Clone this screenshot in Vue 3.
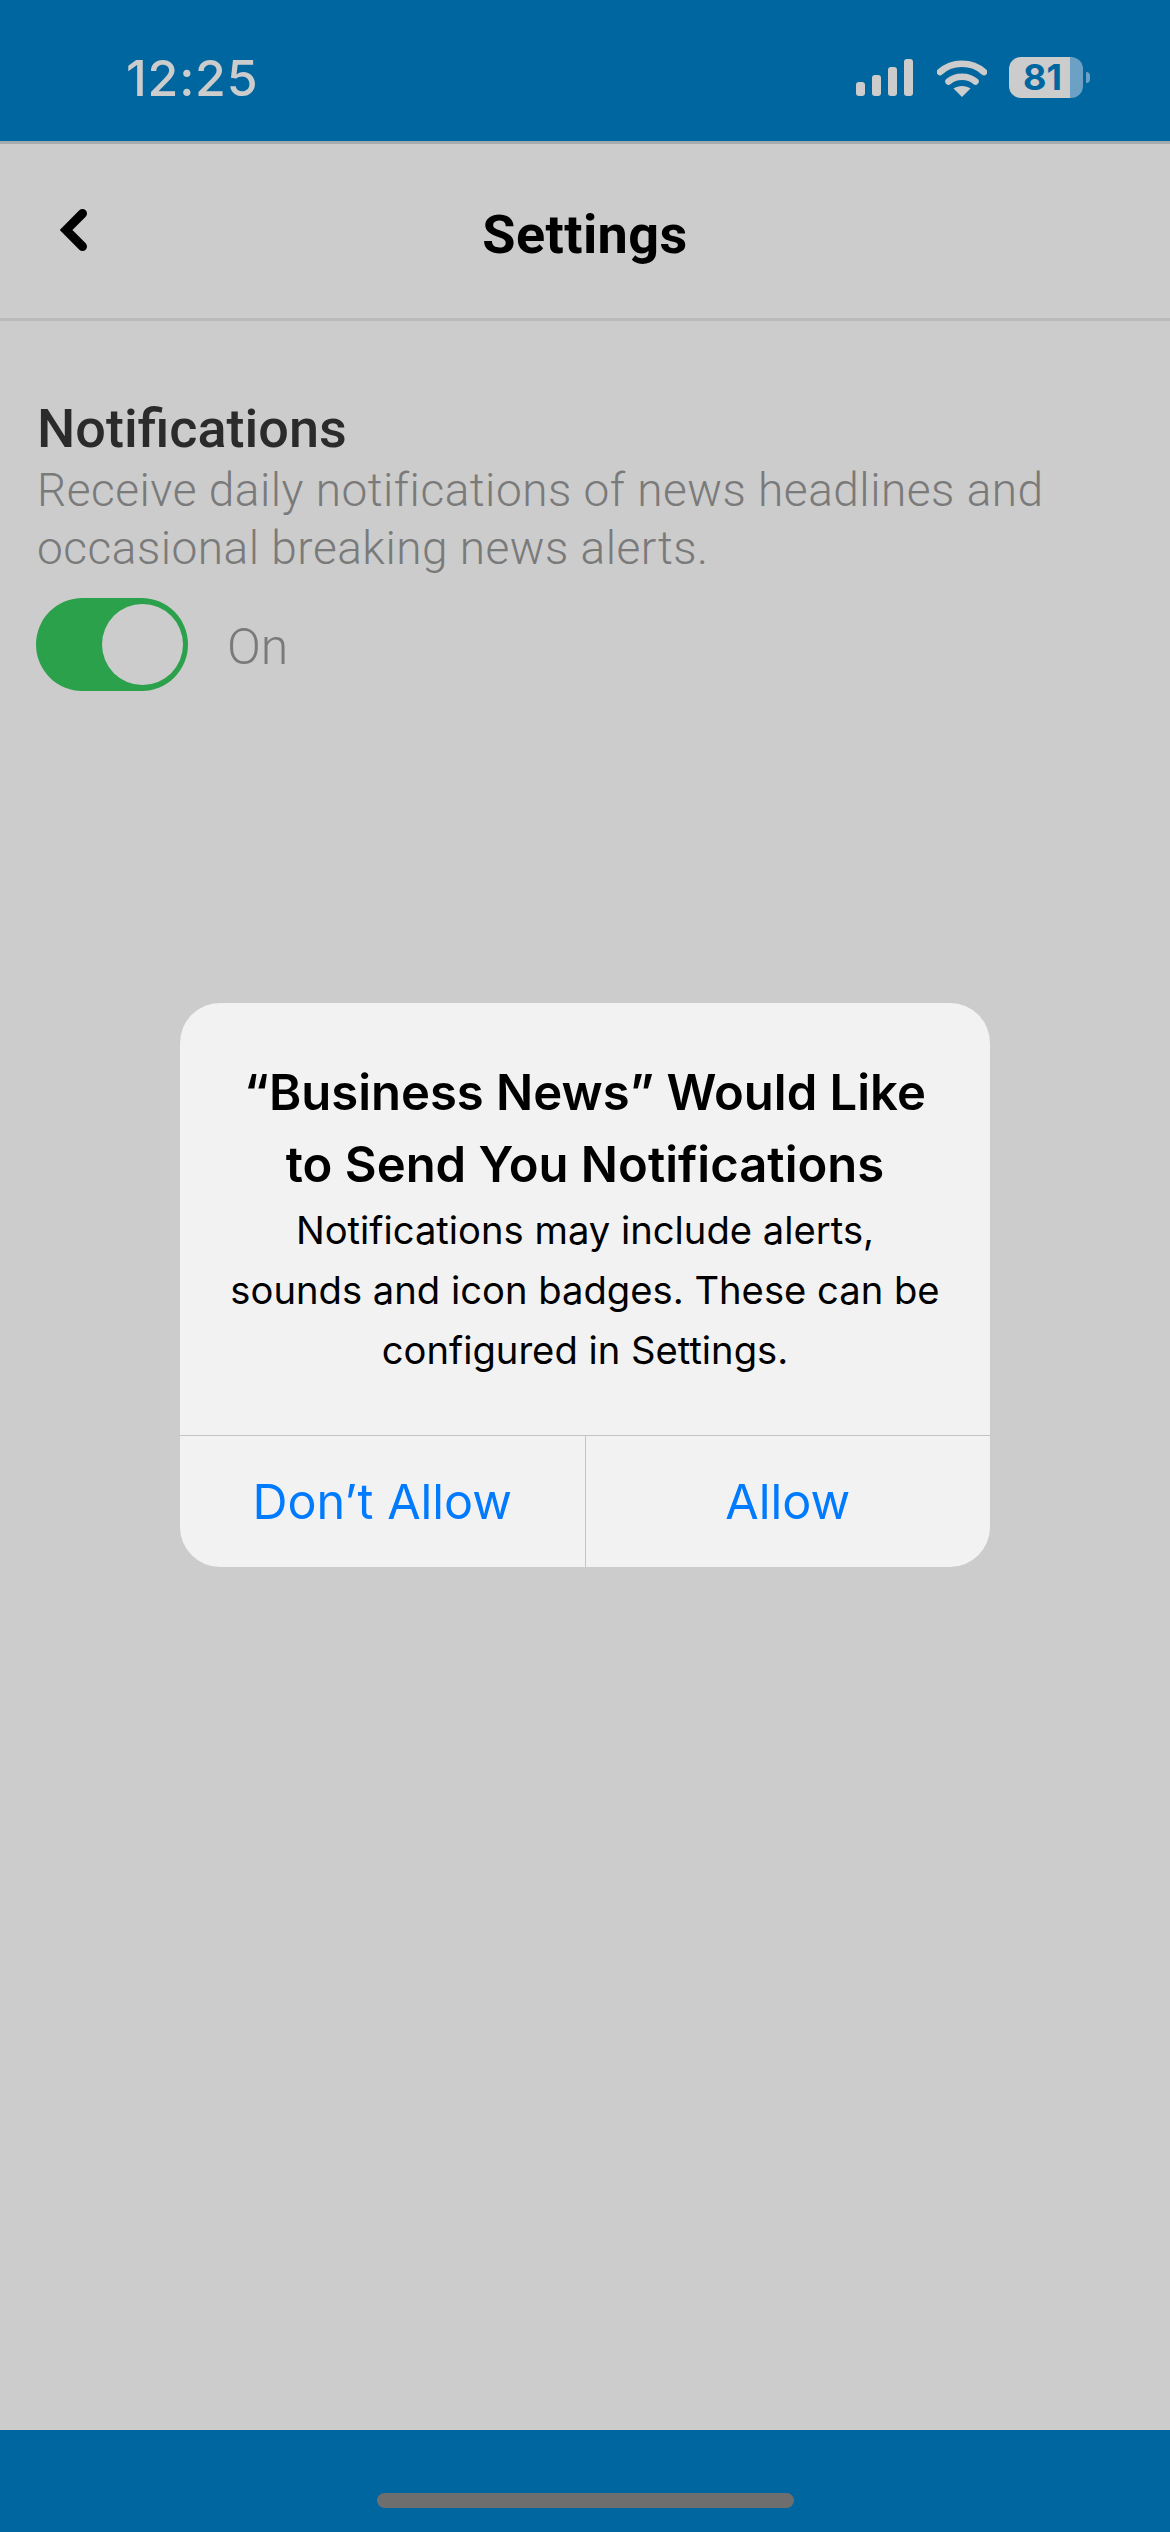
<script setup>
const bars = [14, 21, 29, 37]
</script>

<template>
  <div class="page">
    <div class="status">
      <span class="time">12:25</span>
      <div class="status-icons">
        <div class="signal">
          <i v-for="h in bars" :key="h" class="bar" :style="{ height: h + 'px' }"></i>
        </div>
        <svg class="wifi" width="50" height="38" viewBox="0 0 50 38" fill="none">
          <path d="M3 13C15 2 35 2 47 13" stroke="#ccc" stroke-width="6.5" stroke-linecap="round" />
          <path d="M11.5 22.5C18.5 16 31.5 16 38.5 22.5" stroke="#ccc" stroke-width="6.5" stroke-linecap="round" />
          <path d="M16.5 29.5C21 26 29 26 33.5 29.5L25 38Z" fill="#ccc" />
        </svg>
        <div class="battery">
          <div class="battery-body">
            <span class="battery-num">81</span>
          </div>
          <i class="battery-tip"></i>
        </div>
      </div>
    </div>

    <header class="nav">
      <svg class="back" width="28" height="42" viewBox="0 0 28 42" fill="none">
        <path d="M22.5 4.5L6 21L22.5 37.5" stroke="#000" stroke-width="9" stroke-linecap="round" stroke-linejoin="miter" />
      </svg>
      <h1 class="nav-title">Settings</h1>
    </header>

    <main class="content">
      <h2 class="section-title">Notifications</h2>
      <p class="section-desc">Receive daily notifications of news headlines and occasional breaking news alerts.</p>
      <div class="toggle-row">
        <div class="toggle"><i class="knob"></i></div>
        <span class="toggle-label">On</span>
      </div>
    </main>

    <footer class="home">
      <i class="home-bar"></i>
    </footer>

    <div class="overlay">
      <div class="alert">
        <div class="alert-body">
          <h3 class="alert-title">“Business News” Would Like to Send You Notifications</h3>
          <p class="alert-text">Notifications may include alerts, sounds and icon badges. These can be configured in Settings.</p>
        </div>
        <div class="alert-actions">
          <button class="alert-btn">Don’t Allow</button>
          <button class="alert-btn">Allow</button>
        </div>
      </div>
    </div>
  </div>
</template>

<style>
html, body { margin: 0; padding: 0; background: #ccc; }
</style>

<style scoped>
.page {
  position: relative;
  width: 1170px;
  height: 2532px;
  display: flex;
  flex-direction: column;
  background: #ccc;
  font-family: Roboto, "Liberation Sans", sans-serif;
  overflow: hidden;
}
.status {
  height: 141px;
  flex: none;
  box-sizing: border-box;
  background: #00669f;
  display: flex;
  justify-content: space-between;
  padding: 0 80px 0 126px;
}
.time {
  font-family: Inter, sans-serif;
  font-size: 50px;
  font-weight: 500;
  letter-spacing: 0.8px;
  line-height: 60px;
  margin-top: 48px;
  color: #ccc;
}
.status-icons {
  display: flex;
  align-items: flex-start;
  padding-top: 57px;
}
.signal {
  display: flex;
  align-items: flex-end;
  gap: 7px;
  height: 37px;
  margin-top: 2px;
  margin-right: 24px;
}
.bar {
  display: block;
  width: 9px;
  border-radius: 3px;
  background: #ccc;
}
.wifi { margin-top: 2px; margin-right: 22px; flex: none; }
.battery { display: flex; align-items: center; height: 41px; }
.battery-body {
  width: 74px;
  height: 41px;
  border-radius: 12px;
  background: linear-gradient(to right, #ccc 0, #ccc 61px, #6ca0c4 61px);
  box-sizing: border-box;
  padding-left: 14px;
  line-height: 41px;
}
.battery-num {
  font-family: Inter, sans-serif;
  font-size: 36px;
  font-weight: 700;
  color: #00669f;
}
.battery-tip {
  display: block;
  width: 4px;
  height: 11px;
  margin-left: 3px;
  border-radius: 0 6px 6px 0;
  background: #6ca0c4;
}
.nav {
  height: 180px;
  flex: none;
  box-sizing: border-box;
  border-top: 3px solid #a3abaf;
  border-bottom: 3px solid #bababa;
  position: relative;
  display: flex;
  align-items: center;
  justify-content: center;
  padding-top: 7px;
}
.back { position: absolute; left: 60px; top: 65px; }
.nav-title {
  margin: 0;
  font-size: 54px;
  font-weight: 700;
  letter-spacing: 0.4px;
  line-height: 64px;
  color: #000;
}
.content { flex: 1; padding: 0 37px; }
.section-title {
  margin: 0;
  padding-top: 76px;
  font-size: 54px;
  font-weight: 500;
  line-height: 64px;
  color: #2b2b2b;
}
.section-desc {
  margin: 0;
  width: 1070px;
  font-size: 46px;
  font-weight: 300;
  letter-spacing: 0.5px;
  line-height: 58px;
  color: #7a7a7a;
}
.toggle-row {
  display: flex;
  align-items: center;
  gap: 39px;
  margin-top: 21px;
}
.toggle {
  width: 152px;
  height: 93px;
  border-radius: 47px;
  background: #2ba14b;
  position: relative;
  margin-left: -1px;
}
.knob {
  position: absolute;
  right: 5px;
  top: 6px;
  width: 81px;
  height: 81px;
  border-radius: 50%;
  background: #ccc;
}
.toggle-label {
  font-size: 50px;
  font-weight: 300;
  line-height: 60px;
  margin-top: 5px;
  color: #7a7a7a;
}
.home {
  flex: none;
  height: 102px;
  background: #00669f;
  display: flex;
  justify-content: center;
  padding-top: 63px;
  box-sizing: border-box;
}
.home-bar {
  display: block;
  width: 417px;
  height: 15px;
  border-radius: 8px;
  background: #6e6e6e;
}
.overlay {
  position: absolute;
  inset: 0;
  display: flex;
  justify-content: center;
  padding-top: 1003px;
  box-sizing: border-box;
  font-family: Inter, sans-serif;
}
.alert {
  width: 810px;
  height: 564px;
  border-radius: 40px;
  background: #f2f2f2;
  display: flex;
  flex-direction: column;
  overflow: hidden;
}
.alert-body {
  flex: 1;
  padding: 54px 48px 0;
  text-align: center;
}
.alert-title {
  margin: 0 auto;
  font-size: 49px;
  font-weight: 600;
  line-height: 72px;
  color: #000;
}
.alert-text {
  margin: -1px 0 0;
  font-size: 38.2px;
  font-weight: 400;
  line-height: 60px;
  color: #000;
}
.alert-actions {
  display: flex;
  height: 132px;
  box-sizing: border-box;
  border-top: 1.5px solid #c4c4c4;
  flex: none;
}
.alert-btn {
  flex: 1;
  border: 0;
  background: none;
  padding: 0;
  font-family: inherit;
  font-size: 48.5px;
  font-weight: 400;
  color: #007aff;
}
.alert-btn + .alert-btn { border-left: 1.5px solid #c4c4c4; }
</style>
